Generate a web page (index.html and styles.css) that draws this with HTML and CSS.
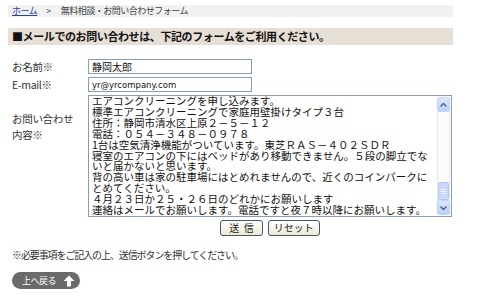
FILE: index.html
```html
<!DOCTYPE html>
<html lang="ja">
<head>
    <meta charset="UTF-8">
    <meta name="viewport" content="width=device-width, initial-scale=1.0">
    <title>無料相談・お問い合わせフォーム</title>
    <link rel="stylesheet" href="styles.css">
</head>
<body>
    <div class="page">
        <div class="crumbs">
            <a href="#">ホーム</a><span class="sep">&gt;</span><span>無料相談・お問い合わせフォーム</span>
        </div>

        <h2 class="heading">■メールでのお問い合わせは、下記のフォームをご利用ください。</h2>

        <form class="form">
            <div class="row">
                <label class="label" for="name">お名前※</label>
                <input class="field" id="name" type="text" value="静岡太郎">
            </div>
            <div class="row">
                <label class="label" for="mail">E-mail※</label>
                <input class="field field-mail" id="mail" type="text" value="yr@yrcompany.com">
            </div>
            <div class="row">
                <label class="label label-msg" for="msg">お問い合わせ内容※</label>
                <div class="memo">
                    <textarea id="msg" class="memo-text">エアコンクリーニングを申し込みます。
標準エアコンクリーニングで家庭用壁掛けタイプ３台
住所：静岡市清水区上原２－５－１２
電話：０５４－３４８－０９７８
1台は空気清浄機能がついています。東芝ＲＡＳ－４０２ＳＤＲ
寝室のエアコンの下にはベッドがあり移動できません。５段の脚立でないと届かないと思います。
背の高い車は家の駐車場にはとめれませんので、近くのコインパークにとめてください。
４月２３日か２５・２６日のどれかにお願いします
連絡はメールでお願いします。電話ですと夜７時以降にお願いします。</textarea>
                    <div class="vscroll">
                        <div class="vscroll-btn">
                            <svg width="7" height="4" viewBox="0 0 7 4"><path d="M0.5 3.5 L3.5 0.5 L6.5 3.5" fill="none" stroke="#4d6185" stroke-width="1.4"/></svg>
                        </div>
                        <div class="vscroll-track">
                            <div class="vscroll-thumb">
                                <span></span><span></span><span></span>
                            </div>
                        </div>
                        <div class="vscroll-btn">
                            <svg width="7" height="4" viewBox="0 0 7 4"><path d="M0.5 0.5 L3.5 3.5 L6.5 0.5" fill="none" stroke="#4d6185" stroke-width="1.4"/></svg>
                        </div>
                    </div>
                </div>
            </div>
            <div class="buttons">
                <button type="button" class="btn btn-send">送&nbsp;&nbsp;信</button>
                <button type="button" class="btn">リセット</button>
            </div>
        </form>

        <p class="note">※必要事項をご記入の上、送信ボタンを押してください。</p>

        <a class="totop" href="#">上へ戻る
            <svg width="12" height="12" viewBox="0 0 12 12"><path d="M6 0.5 L11.5 6 L8 6 L8 11.5 L4 11.5 L4 6 L0.5 6 Z" fill="#fff"/></svg>
        </a>
    </div>
</body>
</html>
```

FILE: styles.css
```css
body{
    margin: 0;
    background: #fff;
    color: #333;
    font-family: "Noto Sans CJK JP", "Liberation Sans", sans-serif;
}
.page{
    padding: 5px 0 0 8px;
}
.crumbs{
    width: 445px;
    height: 12px;
    padding-left: 4px;
    box-sizing: border-box;
    background: #f1f1f1;
    font-size: 9px;
    line-height: 12px;
    letter-spacing: -0.5px;
    color: #444;
}
.crumbs a{
    color: #2a3fa0;
}
.sep{
    margin: 0 10px 0 9px;
}
.heading{
    width: 445px;
    height: 17px;
    margin: 11px 0 14px 0;
    padding-left: 4px;
    box-sizing: border-box;
    background: #e6dfd6;
    font-size: 11px;
    line-height: 17px;
    letter-spacing: -0.4px;
    color: #111;
}

.form{
    margin: 0;
}
.row{
    display: flex;
    align-items: center;
    margin-bottom: 3px;
}
.label{
    width: 80px;
    flex: none;
    padding-left: 4px;
    box-sizing: border-box;
    font-size: 10.5px;
    line-height: 14px;
    letter-spacing: -0.3px;
    color: #333;
}
.label-msg{
    align-self: flex-start;
    padding: 16px 8px 0 4px;
    line-height: 16px;
}
.field{
    width: 164px;
    height: 15px;
    margin: 0;
    padding: 0 3px;
    box-sizing: border-box;
    border: 1px solid #8a9bb4;
    font-family: "Noto Sans CJK JP", sans-serif;
    font-size: 10px;
    color: #111;
}
.field-mail{
    font-family: "DejaVu Sans", sans-serif;
    font-size: 8.5px;
}

.memo{
    display: flex;
    width: 364px;
    height: 122px;
    border: 1px solid #8a9bb4;
    box-sizing: border-box;
}
.memo-text{
    flex: 1;
    margin: 0;
    padding: 0 3px;
    border: 0;
    resize: none;
    overflow: hidden;
    font-family: "Noto Sans CJK JP", sans-serif;
    font-size: 10.5px;
    line-height: 10.9px;
    color: #111;
    outline: none;
}
.vscroll{
    width: 15px;
    flex: none;
    display: flex;
    flex-direction: column;
    background: #fbfbf8;
    padding: 1px;
    box-sizing: border-box;
}
.vscroll-btn{
    height: 13px;
    display: flex;
    align-items: center;
    justify-content: center;
    background: linear-gradient(#dbe6fe, #bccffb);
    border: 1px solid #c3d3fb;
    border-radius: 2px;
}
.vscroll-track{
    flex: 1;
    display: flex;
    flex-direction: column;
    justify-content: flex-end;
    border-left: 1px solid #e3e8f3;
    border-right: 1px solid #e3e8f3;
}
.vscroll-thumb{
    height: 16px;
    display: flex;
    flex-direction: column;
    align-items: center;
    justify-content: center;
    gap: 1px;
    background: #c9d8fc;
    border: 1px solid #b4c8f6;
    border-radius: 2px;
}
.vscroll-thumb span{
    width: 5px;
    height: 1px;
    background: #eef3ff;
}

.buttons{
    display: flex;
    justify-content: center;
    gap: 5px;
    width: 364px;
    margin: 1px 0 0 80px;
}
.btn{
    height: 16px;
    padding: 0 5px;
    border: 1px solid #4a5564;
    border-radius: 3px;
    background: linear-gradient(#ffffff, #ece9d8);
    font-family: "Noto Sans CJK JP", sans-serif;
    font-size: 10px;
    line-height: 12px;
    color: #222;
}
.btn-send{
    padding: 0 8px;
}

.note{
    margin: 12px 0 0 0;
    padding-left: 4px;
    font-size: 10px;
    line-height: 14px;
    letter-spacing: -1.1px;
    color: #333;
}
.totop{
    display: inline-flex;
    align-items: center;
    gap: 7px;
    margin: 10px 0 0 4px;
    height: 17px;
    padding: 0 5px 0 10px;
    border-radius: 9px;
    background: #6a6a6a;
    color: #fff;
    font-size: 9px;
    letter-spacing: -0.5px;
    text-decoration: none;
}
```
